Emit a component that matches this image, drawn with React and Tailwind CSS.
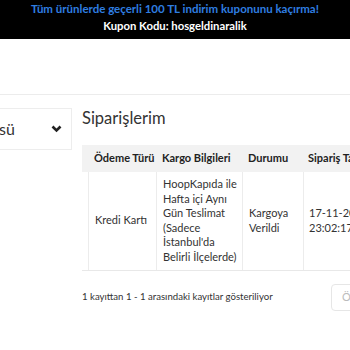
import { useState } from "react";

const rows = [
  {
    odeme: "Kredi Kartı",
    kargo: ["HoopKapıda ile", "Hafta içi Aynı", "Gün Teslimat", "(Sadece", "İstanbul'da", "Belirli İlçelerde)"],
    durum: ["Kargoya", "Verildi"],
    tarih: ["17-11-2021", "23:02:17"],
  },
];

const App = () => {
  const [orders] = useState(rows);

  return (
    <div className="w-[350px] h-[350px] overflow-hidden bg-white font-['Lato','Noto_Sans',sans-serif] text-[#333]">
      <div className="h-[39px] bg-black flex flex-col items-center pt-px leading-[16.5px]">
        <div className="text-[11.5px] font-bold text-[#2f7ee0]">
          Tüm ürünlerde geçerli 100 TL indirim kuponunu kaçırma!
        </div>
        <div className="text-[11.3px] font-bold text-white">Kupon Kodu: hosgeldinaralik</div>
      </div>
      <div className="h-[56px] border-b border-[#ececec]"></div>

      <div className="flex gap-[10px] mt-[13px]">
        <div className="w-[150px] -ml-[78px] shrink-0">
          <div className="h-[42px] border border-[#ededed] flex items-center justify-between pl-[76px] pr-[9px] text-[16px]">
            <span>sü</span>
            <svg width="11" height="8" viewBox="0 0 11 8">
              <path d="M1.5 1.5 L5.5 5.5 L9.5 1.5" fill="none" stroke="#222" strokeWidth="2.6" />
            </svg>
          </div>
        </div>

        <div className="w-[290px] shrink-0">
          <h2 className="text-[16.5px] leading-[20px] text-[#333]">Siparişlerim</h2>

          <div className="mt-[17px] text-[11px]">
            <div className="grid grid-cols-[6px_68px_86px_61px_69px] h-[27px] bg-[#f2f2f2] items-center font-bold text-[#222] whitespace-nowrap">
              <div></div>
              <div className="pl-[6px]">Ödeme Türü</div>
              <div className="pl-[6px]">Kargo Bilgileri</div>
              <div className="pl-[6px]">Durumu</div>
              <div className="pl-[5px] overflow-hidden">Sipariş Tarihi</div>
            </div>
            {orders.map((o, i) => (
              <div key={i} className="grid grid-cols-[6px_68px_86px_61px_69px] border-b border-[#e8e8e8] leading-[14.6px] text-[#333]">
                <div></div>
                <div className="border-l border-[#ececec] pl-[6px] flex items-center">{o.odeme}</div>
                <div className="border-l border-[#ececec] pl-[6px] py-[5px]">
                  {o.kargo.map((l) => (
                    <div key={l}>{l}</div>
                  ))}
                </div>
                <div className="border-l border-[#ececec] pl-[6px] flex flex-col justify-center">
                  {o.durum.map((l) => (
                    <div key={l}>{l}</div>
                  ))}
                </div>
                <div className="border-l border-[#ececec] pl-[5px] flex flex-col justify-center whitespace-nowrap overflow-hidden">
                  {o.tarih.map((l) => (
                    <div key={l}>{l}</div>
                  ))}
                </div>
              </div>
            ))}
          </div>

          <div className="flex items-center justify-between mt-[13px]">
            <span className="text-[9.6px] text-[#333]">1 kayıttan 1 - 1 arasındaki kayıtlar gösteriliyor</span>
            <div className="w-[41px] h-[27px] border border-[#e6e6e6] rounded-[4px] flex items-center pl-[10px] text-[11px] text-[#bbb]">
              Önceki
            </div>
          </div>
        </div>
      </div>
    </div>
  );
};

export default App;
